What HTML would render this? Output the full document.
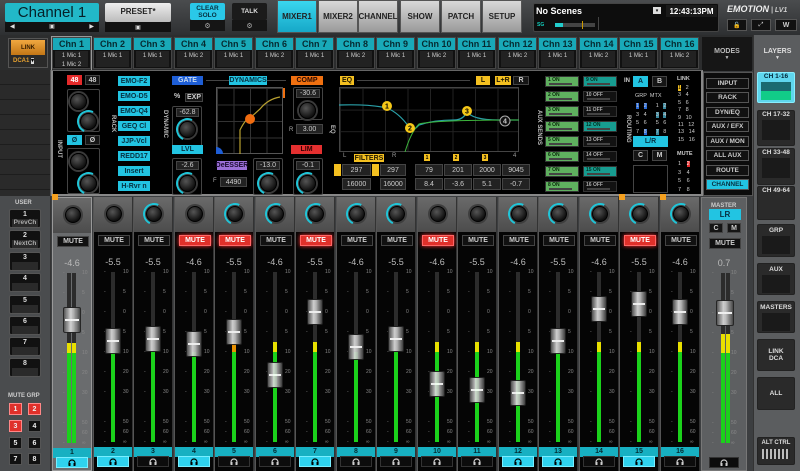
<!DOCTYPE html>
<html><head><meta charset="utf-8"><style>
*{box-sizing:border-box;margin:0;padding:0}
body{width:800px;height:471px;overflow:hidden;background:#3c3e40;font-family:"Liberation Sans",sans-serif;position:relative;color:#ddd}
.a{position:absolute}
.c{display:flex;align-items:center;justify-content:center;text-align:center}
.b{font-weight:bold}
.tab{top:0;height:33px;width:40px;background:linear-gradient(#d8d8d8,#9a9a9a);color:#222;font-size:8px;font-weight:bold;border:1px solid #555}
.ct{top:37px;width:39px;height:32px;background:#111;border:1px solid #444}
.ct .h{position:absolute;left:0;top:0;width:100%;height:12px;background:#19a9b8;color:#062a30;font-size:9px;font-weight:bold;text-align:center;line-height:12px}
.ct .m{position:absolute;left:2px;right:2px;top:13px;bottom:1px;background:#222;font-size:6px;color:#ccc;text-align:center;line-height:9px;padding-top:1px}
.s{top:197px;width:40px;height:274px;background:#050505;border-left:1px solid #555;border-right:1px solid #333}
.s .top{position:absolute;left:0;top:0;width:100%;height:35px;background:linear-gradient(#6a6a6a,#4c4c4c)}
.k{position:absolute;width:20px;height:20px;border-radius:50%;background:radial-gradient(circle at 40% 35%,#555,#111 70%);border:1px solid #000;box-shadow:0 0 0 2px #3a3a3a}
.k.r::before{content:"";position:absolute;left:-4px;top:-4px;right:-4px;bottom:-4px;border-radius:50%;border:2px solid transparent;border-left-color:#20c5d8;border-top-color:#20c5d8;transform:rotate(-20deg)}
.s .k{left:12px;top:9px;width:16px;height:16px;box-shadow:0 0 0 2px #3e3e3e}
.mu{position:absolute;left:4px;width:32px;top:38px;height:11px;background:#111;border:1px solid #444;font-size:7px;font-weight:bold;color:#ccc;text-align:center;line-height:9px}
.mu.on{background:#e0302a;color:#fff;border-color:#f66;box-shadow:0 0 4px #f33}
.v{position:absolute;left:0;width:100%;top:60px;font-size:9px;color:#bbb;text-align:center}
.tr{position:absolute;left:17px;top:75px;width:4px;height:170px;background:#2c2c2c}
.y{position:absolute;left:17px;width:4px;top:145px;height:10px;background:#e8e000}
.g{position:absolute;left:17px;width:4px;top:155px;height:90px;background:#1bd11b}
.cap{position:absolute;left:11px;width:16px;height:26px;border-radius:2px;background:linear-gradient(90deg,#555,#ddd 40%,#bbb 60%,#444);border:1px solid #222;opacity:.92}
.cap::after{content:"";position:absolute;left:1px;right:1px;top:11px;height:2px;background:#fff}
.sc i{position:absolute;left:29px;font-style:normal;font-size:5px;color:#888;line-height:6px}
.sc i::before{content:"-";position:absolute;left:-19px}
.sc i:nth-child(1){top:72px}.sc i:nth-child(2){top:92px}.sc i:nth-child(3){top:112px}.sc i:nth-child(4){top:132px}.sc i:nth-child(5){top:152px}.sc i:nth-child(6){top:172px}.sc i:nth-child(7){top:192px}.sc i:nth-child(8){top:222px}.sc i:nth-child(9){top:232px}.sc i:nth-child(10){top:242px}
.n{position:absolute;left:0;width:100%;top:250px;height:10px;background:#17b0c2;color:#052a30;font-size:7px;font-weight:bold;text-align:center;line-height:10px}
.hp{position:absolute;left:3px;right:3px;top:259px;height:11px;background:#0c0c0c;border:1px solid #333;display:flex;align-items:center;justify-content:center}
.hp.on{background:#2fd2ee;border-color:#7ef}
.hp svg{width:8px;height:7px}
.bt{position:absolute;font-size:7px;font-weight:bold;display:flex;align-items:center;justify-content:center;text-align:center}
.cy{background:#22c4e2;color:#063040}
.dk{background:#151515;color:#ccc;border:1px solid #444}
.rk{left:118px;width:32px;height:10px}
.vb{position:absolute;border:1px solid #444;background:#000;border-radius:2px}
.val{position:absolute;background:#222;border:1px solid #444;color:#ccc;font-size:7px;display:flex;align-items:center;justify-content:center}
.vt{position:absolute;font-size:6px;color:#bbb;font-weight:bold;writing-mode:vertical-rl}
.ax{position:absolute;height:11px;width:34px;font-size:5px;font-weight:bold;padding-left:2px;line-height:6px;border:1px solid #333}
.ax::after{content:"";position:absolute;left:3px;right:6px;bottom:1px;height:2px;background:#444}
.ag{background:#5fb05f;color:#0a2a0a}
.at{background:#179c90;color:#032}
.ao{background:#121212;color:#aaa}
.md{left:706px;width:43px;height:11px;border:1px solid #555;background:#111;color:#ccc;font-size:6.5px}
.ly{left:757px;width:38px;border:1px solid #222;background:#2a2a2a;border-radius:2px;font-size:6.5px;font-weight:bold;color:#ddd;text-align:center}
.ub{left:9px;width:32px;height:19px;background:#111;border:1px solid #555;border-radius:2px;font-size:7px;font-weight:bold;color:#ddd;text-align:center;line-height:9px}
.ub span{display:block;margin:0 2px;background:#2a2a2a;color:#aaa;height:8px;font-size:6.5px;line-height:8px}
.mg{width:13px;height:12px;font-size:7px;font-weight:bold;background:#111;color:#eee;border:1px solid #555;display:flex;align-items:center;justify-content:center}
.mg.r{background:#e0302a;border-color:#f88}
.lk{position:absolute;font-size:5.5px;color:#ccc}
</style></head><body>

<!-- HEADER -->
<div class="a" style="left:0;top:0;width:800px;height:35px;background:linear-gradient(#4a4c4e,#2e3032)"></div>
<div class="a c" style="left:5px;top:3px;width:94px;height:19px;background:#22b8c8;color:#062028;font-size:15px;border-radius:2px">Channel 1</div>
<div class="a" style="left:5px;top:22px;width:94px;height:10px;background:#111;font-size:6px;color:#ddd;display:flex;justify-content:space-between;padding:1px 5px"><span>◀</span><span>▣</span><span>▶</span></div>
<div class="a c b" style="left:105px;top:3px;width:66px;height:19px;background:linear-gradient(#eee,#bbb);color:#222;font-size:8px;align-items:flex-start;padding-top:4px;border-radius:2px">PRESET*</div>
<div class="a c" style="left:105px;top:22px;width:66px;height:10px;background:#111;font-size:6px;color:#ddd">▣</div>
<div class="a c b" style="left:190px;top:3px;width:35px;height:17px;background:#2ac8e8;color:#063040;font-size:6.5px;line-height:7px;border-radius:2px">CLEAR<br>SOLO</div>
<div class="a c" style="left:190px;top:20px;width:35px;height:11px;background:#151515;font-size:7px;color:#aaa">⚙</div>
<div class="a c b" style="left:232px;top:3px;width:35px;height:17px;background:#1b1b1b;color:#ddd;font-size:6.5px;border-radius:2px">TALK</div>
<div class="a c" style="left:232px;top:20px;width:35px;height:11px;background:#151515;font-size:7px;color:#aaa">⚙</div>
<div class="a tab c" style="left:277px;background:linear-gradient(#3ad6ee,#16a8c8)">MIXER1</div>
<div class="a tab c" style="left:318px">MIXER2</div>
<div class="a tab c" style="left:358px">CHANNEL</div>
<div class="a tab c" style="left:400px">SHOW</div>
<div class="a tab c" style="left:441px">PATCH</div>
<div class="a tab c" style="left:482px">SETUP</div>
<div class="a" style="left:533px;top:3px;width:186px;height:29px;background:#0d0d0d;border:1px solid #444;border-radius:2px"></div>
<div class="a b" style="left:536px;top:6px;font-size:9px;color:#fff">No Scenes</div>
<div class="a c" style="left:653px;top:7px;width:8px;height:7px;background:#ddd;color:#000;font-size:5px">▾</div>
<div class="a c b" style="left:666px;top:5px;width:51px;height:12px;background:#1a1a1a;color:#fff;font-size:8px">12:43:13PM</div>
<div class="a b" style="left:537px;top:22px;font-size:5px;color:#1cb">SG</div>
<div class="a" style="left:555px;top:23px;width:40px;height:4px;background:#444"><div style="width:8px;height:4px;background:#2cc"></div></div>
<div class="a" style="left:582px;top:21px;width:1px;height:8px;background:#c90"></div>
<div class="a" style="left:598px;top:17px;width:1px;height:13px;background:#444"></div>
<div class="a b" style="left:727px;top:4px;font-size:9px;font-style:italic;color:#eee">EMOTION<span style="font-size:7px;color:#ccc"> | LV1</span></div>
<div class="a c" style="left:727px;top:19px;width:20px;height:12px;background:#111;border:1px solid #555;font-size:6px">🔓</div>
<div class="a c" style="left:751px;top:19px;width:20px;height:12px;background:#111;border:1px solid #555;font-size:6px">⤢</div>
<div class="a c b" style="left:775px;top:19px;width:22px;height:12px;background:#111;border:1px solid #555;font-size:7px;color:#ccc">W</div>

<!-- CHANNEL TAB ROW -->
<div class="a" style="left:0;top:35px;width:800px;height:35px;background:#2c2d2e"></div>
<div class="a" style="left:8px;top:38px;width:40px;height:30px;background:#2a2a2a;border:1px solid #555"></div>
<div class="a c b" style="left:11px;top:40px;width:34px;height:15px;background:linear-gradient(#f0a840,#c27616);color:#3a2000;font-size:6px">LINK</div>
<div class="a b" style="left:13px;top:57px;font-size:6px;color:#e5a030">DCA1 <span style="background:#ddd;color:#000">▾</span></div>
<div class="a" style="left:51px;top:36px;width:41px;height:36px;border:1px solid #999"></div>
<div class="a ct" style="left:52px"><div class="h">Chn 1</div><div class="m">1 Mic 1<br>1 Mic 2</div></div>
<div class="a ct" style="left:93px"><div class="h">Chn 2</div><div class="m">1 Mic 1</div></div>
<div class="a ct" style="left:133px"><div class="h">Chn 3</div><div class="m">1 Mic 1</div></div>
<div class="a ct" style="left:174px"><div class="h">Chn 4</div><div class="m">1 Mic 2</div></div>
<div class="a ct" style="left:214px"><div class="h">Chn 5</div><div class="m">1 Mic 1</div></div>
<div class="a ct" style="left:255px"><div class="h">Chn 6</div><div class="m">1 Mic 2</div></div>
<div class="a ct" style="left:295px"><div class="h">Chn 7</div><div class="m">1 Mic 1</div></div>
<div class="a ct" style="left:336px"><div class="h">Chn 8</div><div class="m">1 Mic 2</div></div>
<div class="a ct" style="left:376px"><div class="h">Chn 9</div><div class="m">1 Mic 1</div></div>
<div class="a ct" style="left:417px"><div class="h">Chn 10</div><div class="m">1 Mic 2</div></div>
<div class="a ct" style="left:457px"><div class="h">Chn 11</div><div class="m">1 Mic 1</div></div>
<div class="a ct" style="left:498px"><div class="h">Chn 12</div><div class="m">1 Mic 2</div></div>
<div class="a ct" style="left:538px"><div class="h">Chn 13</div><div class="m">1 Mic 1</div></div>
<div class="a ct" style="left:579px"><div class="h">Chn 14</div><div class="m">1 Mic 2</div></div>
<div class="a ct" style="left:619px"><div class="h">Chn 15</div><div class="m">1 Mic 1</div></div>
<div class="a ct" style="left:660px"><div class="h">Chn 16</div><div class="m">1 Mic 2</div></div>
<div class="a c b" style="left:702px;top:37px;width:50px;height:34px;background:#161616;color:#bbb;font-size:7px;flex-direction:column">MODES<span style="font-size:5px">▼</span></div>
<div class="a" style="left:753px;top:35px;width:47px;height:436px;background:#5b5d5f;border-left:1px solid #333"></div>
<div class="a c b" style="left:755px;top:37px;width:45px;height:34px;color:#ddd;font-size:7px;flex-direction:column">LAYERS<span style="font-size:5px">▼</span></div>

<!-- LEFT SIDE MID -->
<div class="a" style="left:0;top:70px;width:51px;height:126px;background:repeating-linear-gradient(#2a2a2a 0 14px,#1d1d1d 14px 15px);border-right:1px solid #555"></div>
<!-- CHANNEL PANEL -->
<div class="a" style="left:51px;top:70px;width:652px;height:126px;background:#000;border:2px solid #888;border-top:1px solid #666"></div>
<div class="bt" style="left:67px;top:75px;width:15px;height:10px;background:#e52a2a;color:#fff">48</div>
<div class="bt dk" style="left:85px;top:75px;width:15px;height:10px">48</div>
<div class="vb" style="left:67px;top:89px;width:33px;height:43px"></div>
<div class="k" style="left:70px;top:93px;width:17px;height:17px"></div>
<div class="k r" style="left:80px;top:113px;width:17px;height:17px"></div>
<div class="bt cy" style="left:67px;top:135px;width:15px;height:10px">Ø</div>
<div class="bt dk" style="left:85px;top:135px;width:15px;height:10px">Ø</div>
<div class="vb" style="left:67px;top:148px;width:33px;height:46px"></div>
<div class="k" style="left:70px;top:153px;width:17px;height:17px"></div>
<div class="k r" style="left:80px;top:175px;width:17px;height:17px"></div>
<div class="vt" style="left:56px;top:140px">INPUT</div>
<div class="vt" style="left:110px;top:115px">RACK</div>
<div class="bt cy rk" style="top:76px">EMO-F2</div>
<div class="bt cy rk" style="top:91px">EMO-D5</div>
<div class="bt cy rk" style="top:106px">EMO-Q4</div>
<div class="bt cy rk" style="top:121px">GEQ Cl</div>
<div class="bt cy rk" style="top:136px">JJP-Vcl</div>
<div class="bt cy rk" style="top:151px">REDD17</div>
<div class="bt cy rk" style="top:166px">Insert</div>
<div class="bt cy rk" style="top:181px">H-Rvr n</div>
<div class="vt" style="left:162px;top:110px">DYNAMIC</div>
<div class="bt" style="left:172px;top:76px;width:31px;height:9px;background:#1e5ed6;color:#cde">GATE</div>
<div class="a" style="left:206px;top:80px;width:80px;height:1px;background:#444"></div>
<div class="bt cy" style="left:229px;top:76px;width:38px;height:9px">DYNAMICS</div>
<div class="bt" style="left:291px;top:76px;width:32px;height:9px;background:#f07010;color:#2a0a00">COMP</div>
<div class="a b" style="left:174px;top:93px;font-size:7px;color:#ccc">%</div>
<div class="bt dk" style="left:185px;top:93px;width:18px;height:9px">EXP</div>
<div class="vb" style="left:172px;top:106px;width:30px;height:44px"></div>
<div class="val" style="left:176px;top:108px;width:23px;height:9px">-62.8</div>
<div class="k r" style="left:179px;top:121px;width:17px;height:17px"></div>
<div class="bt cy" style="left:172px;top:145px;width:31px;height:9px">LVL</div>
<div class="vb" style="left:172px;top:158px;width:30px;height:37px"></div>
<div class="val" style="left:176px;top:161px;width:23px;height:9px">-2.6</div>
<div class="k r" style="left:179px;top:175px;width:17px;height:17px"></div>
<div class="a" style="left:216px;top:87px;width:67px;height:67px;border:1px solid #555;background-color:#000;background-image:linear-gradient(#333 1px,transparent 1px),linear-gradient(90deg,#333 1px,transparent 1px);background-size:16.5px 16.5px"></div>
<svg class="a" style="left:216px;top:87px" width="67" height="67"><path d="M24 67 V43 Q30 31 34 31 L44 22 Q52 12 64 10" fill="none" stroke="#b8a030" stroke-width="1.2"/><circle cx="34" cy="32" r="5" fill="#f06c10"/><path d="M0 67 V60 A7 7 0 0 1 7 67Z" fill="#1e5ed6"/></svg>
<div class="a" style="left:283px;top:88px;width:2px;height:10px;background:#f07010"></div>
<div class="bt" style="left:217px;top:161px;width:30px;height:9px;background:#9b70d8;color:#1a0a30">DeESSER</div>
<div class="a" style="left:213px;top:178px;font-size:6px;color:#aaa">F</div>
<div class="val" style="left:220px;top:177px;width:27px;height:10px">4490</div>
<div class="vb" style="left:253px;top:158px;width:30px;height:37px"></div>
<div class="val" style="left:256px;top:161px;width:24px;height:9px">-13.0</div>
<div class="k r" style="left:260px;top:175px;width:17px;height:17px"></div>
<div class="vb" style="left:293px;top:87px;width:30px;height:33px"></div>
<div class="val" style="left:296px;top:89px;width:24px;height:9px">-30.6</div>
<div class="k" style="left:299px;top:102px;width:17px;height:17px"></div>
<div class="a" style="left:289px;top:127px;font-size:6px;color:#aaa">R</div>
<div class="val" style="left:296px;top:124px;width:27px;height:10px">3.00</div>
<div class="bt" style="left:291px;top:145px;width:31px;height:9px;background:#e53030;color:#300">LIM</div>
<div class="vb" style="left:293px;top:158px;width:30px;height:37px"></div>
<div class="val" style="left:296px;top:161px;width:24px;height:9px">-0.1</div>
<div class="k r" style="left:299px;top:175px;width:17px;height:17px"></div>
<div class="vt" style="left:329px;top:125px">EQ</div>
<div class="bt" style="left:340px;top:76px;width:14px;height:9px;background:#f4c020;color:#201800">EQ</div>
<div class="a" style="left:357px;top:80px;width:113px;height:1px;background:#444"></div>
<div class="bt" style="left:476px;top:76px;width:14px;height:9px;background:#f4c020;color:#201800">L</div>
<div class="bt" style="left:495px;top:76px;width:16px;height:9px;background:#f4c020;color:#201800">L+R</div>
<div class="bt dk" style="left:513px;top:76px;width:16px;height:9px">R</div>
<div class="a" style="left:339px;top:87px;width:180px;height:65px;border:1px solid #444;background-color:#000;background-image:linear-gradient(90deg,#222 1px,transparent 1px),linear-gradient(#222 1px,transparent 1px);background-size:22.5px 100%,100% 21.6px"></div>
<svg class="a" style="left:339px;top:87px" width="180" height="65"><path d="M0 18 Q30 17 48 21 Q60 26 70 40 Q73 46 80 38 Q95 33 115 33 Q125 33 128 24 Q132 33 160 33 L180 33" fill="none" stroke="#2aa0a8" stroke-width="1.2"/><path d="M66 65 Q72 45 80 37 Q95 33 180 33" fill="none" stroke="#3cb43c" stroke-width="1"/><circle cx="48" cy="19" r="5" fill="#f6c818"/><text x="48" y="21.5" font-size="7" text-anchor="middle" font-weight="bold" fill="#000">1</text><circle cx="71" cy="41" r="5" fill="#f6c818"/><text x="71" y="43.5" font-size="7" text-anchor="middle" font-weight="bold" fill="#000">2</text><circle cx="128" cy="24" r="5" fill="#f6c818"/><text x="128" y="26.5" font-size="7" text-anchor="middle" font-weight="bold" fill="#000">3</text><circle cx="166" cy="34" r="5" fill="#111" stroke="#aaa"/><text x="166" y="36.5" font-size="7" text-anchor="middle" font-weight="bold" fill="#ccc">4</text></svg>
<div class="a" style="left:343px;top:153px;font-size:6px;color:#999">L</div>
<div class="bt" style="left:354px;top:154px;width:30px;height:8px;background:#f4c020;color:#201800">FILTERS</div>
<div class="a" style="left:392px;top:153px;font-size:6px;color:#999">R</div>
<div class="bt" style="left:424px;top:154px;width:6px;height:7px;background:#f4c020;color:#000;font-size:5px">1</div>
<div class="bt" style="left:453px;top:154px;width:6px;height:7px;background:#f4c020;color:#000;font-size:5px">2</div>
<div class="bt" style="left:482px;top:154px;width:6px;height:7px;background:#f4c020;color:#000;font-size:5px">3</div>
<div class="a" style="left:513px;top:153px;font-size:6px;color:#999">4</div>
<div class="a" style="left:334px;top:164px;width:7px;height:12px;background:#f4c020"></div>
<div class="val" style="left:342px;top:164px;width:29px;height:12px">297</div>
<div class="a" style="left:372px;top:164px;width:7px;height:12px;background:#f4c020"></div>
<div class="val" style="left:380px;top:164px;width:26px;height:12px">297</div>
<div class="val" style="left:415px;top:164px;width:28px;height:12px">79</div>
<div class="val" style="left:444px;top:164px;width:28px;height:12px">201</div>
<div class="val" style="left:473px;top:164px;width:28px;height:12px">2000</div>
<div class="val" style="left:502px;top:164px;width:28px;height:12px">9045</div>
<div class="val" style="left:342px;top:178px;width:29px;height:12px">16000</div>
<div class="val" style="left:380px;top:178px;width:26px;height:12px">16000</div>
<div class="val" style="left:415px;top:178px;width:28px;height:12px">8.4</div>
<div class="val" style="left:444px;top:178px;width:28px;height:12px">-3.6</div>
<div class="val" style="left:473px;top:178px;width:28px;height:12px">5.1</div>
<div class="val" style="left:502px;top:178px;width:28px;height:12px">-0.7</div>
<div class="vt" style="left:536px;top:110px">AUX SENDS</div>
<div class="ax ag" style="left:545px;top:76px">1 ON</div><div class="ax at" style="left:583px;top:76px">9 ON</div>
<div class="ax ag" style="left:545px;top:91px">2 ON</div><div class="ax ao" style="left:583px;top:91px">10 OFF</div>
<div class="ax ag" style="left:545px;top:106px">3 ON</div><div class="ax ao" style="left:583px;top:106px">11 OFF</div>
<div class="ax ag" style="left:545px;top:121px">4 ON</div><div class="ax at" style="left:583px;top:121px">12 ON</div>
<div class="ax ag" style="left:545px;top:136px">5 ON</div><div class="ax ao" style="left:583px;top:136px">13 OFF</div>
<div class="ax ag" style="left:545px;top:151px">6 ON</div><div class="ax ao" style="left:583px;top:151px">14 OFF</div>
<div class="ax ag" style="left:545px;top:166px">7 ON</div><div class="ax at" style="left:583px;top:166px">15 ON</div>
<div class="ax ag" style="left:545px;top:181px">8 ON</div><div class="ax ao" style="left:583px;top:181px">16 OFF</div>
<div class="a b" style="left:624px;top:78px;font-size:6px;color:#ccc">IN</div>
<div class="bt cy" style="left:633px;top:76px;width:15px;height:11px">A</div>
<div class="bt dk" style="left:652px;top:76px;width:15px;height:11px">B</div>
<div class="vt" style="left:625px;top:115px">ROUTING</div>
<div class="lk" style="left:635px;top:93px">GRP &nbsp;MTX</div>
<div class="lk" style="left:636px;top:102px;line-height:8.5px;word-spacing:3px"><span style="background:#2a6ad6">1</span> <span style="background:#2a6ad6">2</span> &nbsp;1 <span style="background:#3a8aa0">2</span><br>3 4 &nbsp;<span style="background:#3a8aa0">3</span> <span style="background:#3a8aa0">4</span><br>5 6 &nbsp;5 6<br>7 <span style="background:#2a6ad6">8</span> &nbsp;<span style="background:#3a8aa0">7</span> 8</div>
<div class="bt cy" style="left:633px;top:136px;width:35px;height:11px">L/R</div>
<div class="bt dk" style="left:633px;top:150px;width:15px;height:11px">C</div>
<div class="bt dk" style="left:652px;top:150px;width:15px;height:11px">M</div>
<div class="a" style="left:633px;top:165px;width:35px;height:28px;border:1px solid #444"></div>
<div class="lk b" style="left:677px;top:76px">LINK</div>
<div class="lk" style="left:678px;top:85px;line-height:7.4px;word-spacing:3px"><span style="background:#f4c020;color:#000">1</span> 2<br>3 4<br>5 6<br>7 8<br>9 10<br>11 12<br>13 14<br>15 16</div>
<div class="lk b" style="left:677px;top:151px;color:#ccc">MUTE</div>
<div class="lk" style="left:678px;top:160px;line-height:8.5px;word-spacing:4px">1 <span style="background:#e52a2a;color:#fff">2</span><br>3 4<br>5 6<br>7 8</div>
<!-- MODES -->
<div class="a" style="left:703px;top:72px;width:50px;height:124px;background:#0c0c0c;border:1px solid #555"></div>
<div class="bt md" style="top:78px">INPUT</div>
<div class="bt md" style="top:92px">RACK</div>
<div class="bt md" style="top:107px">DYN/EQ</div>
<div class="bt md" style="top:121px">AUX / EFX</div>
<div class="bt md" style="top:136px">AUX / MON</div>
<div class="bt md" style="top:150px">ALL AUX</div>
<div class="bt md" style="top:165px">ROUTE</div>
<div class="bt md cy" style="top:179px;background:#22c4e2;color:#063040">CHANNEL</div>
<!-- LAYERS -->
<div class="a ly" style="top:72px;height:31px;background:#5fd6ee;border:1px solid #8ef;color:#023">CH 1-16<div style="margin:2px 3px;height:18px;background:linear-gradient(#1a6a70 50%,#1c8 50%)"></div></div>
<div class="a ly" style="top:110px;height:36px">CH 17-32<div style="margin:2px 4px;height:20px;background:#1a1a1a"></div></div>
<div class="a ly" style="top:148px;height:37px">CH 33-48<div style="margin:2px 4px;height:20px;background:#1a1a1a"></div></div>
<div class="a ly" style="top:186px;height:34px">CH 49-64</div>
<div class="a ly" style="top:224px;height:33px;padding-top:2px">GRP<div style="margin:2px 4px;height:18px;background:#1a1a1a"></div></div>
<div class="a ly" style="top:263px;height:32px;padding-top:2px">AUX<div style="margin:2px 4px;height:18px;background:#1a1a1a"></div></div>
<div class="a ly" style="top:301px;height:32px;padding-top:2px">MASTERS<div style="margin:2px 4px;height:18px;background:#1a1a1a"></div></div>
<div class="a ly c" style="top:339px;height:32px">LINK<br>DCA</div>
<div class="a ly c" style="top:377px;height:33px">ALL</div>
<div class="a ly" style="top:437px;height:28px;font-size:6px;padding-top:2px">ALT CTRL<div style="margin:3px 4px;height:10px;background:repeating-linear-gradient(90deg,#bbb 0 2px,#222 2px 4px)"></div></div>

<!-- LEFT USER PANEL -->
<div class="a" style="left:0;top:196px;width:51px;height:275px;background:#4a4c4e;border-right:1px solid #333"></div>
<div class="a b" style="left:15px;top:200px;font-size:6px;color:#ccc">USER</div>
<div class="a ub" style="top:209px">1<span>PrevCh</span></div>
<div class="a ub" style="top:230px">2<span>NextCh</span></div>
<div class="a ub" style="top:252px">3<span></span></div>
<div class="a ub" style="top:273px">4<span></span></div>
<div class="a ub" style="top:295px">5<span></span></div>
<div class="a ub" style="top:316px">6<span></span></div>
<div class="a ub" style="top:337px">7<span></span></div>
<div class="a ub" style="top:358px">8<span></span></div>
<div class="a b" style="left:8px;top:393px;font-size:6px;color:#ccc">MUTE GRP</div>
<div class="a mg r" style="left:9px;top:403px">1</div><div class="a mg r" style="left:28px;top:403px">2</div>
<div class="a mg r" style="left:9px;top:420px">3</div><div class="a mg" style="left:28px;top:420px">4</div>
<div class="a mg" style="left:9px;top:437px">5</div><div class="a mg" style="left:28px;top:437px">6</div>
<div class="a mg" style="left:9px;top:453px">7</div><div class="a mg" style="left:28px;top:453px">8</div>

<!-- STRIPS -->
<div class="a s" style="left:52px;background:#6a6c6e;border:1px solid #999"><div class="top"></div><div class="k"></div><div class="mu">MUTE</div><div class="v">-4.6</div><div class="sc"><i>10</i><i>5</i><i>0</i><i>5</i><i>10</i><i>20</i><i>30</i><i>50</i><i>60</i><i>∞</i></div><div class="tr" style="left:14px;width:9px;background:linear-gradient(90deg,#2c2c2c 4px,transparent 4px 5px,#2c2c2c 5px)"></div><div class="y" style="left:14px;width:9px;background:linear-gradient(90deg,#e8e000 4px,transparent 4px 5px,#e8e000 5px)"></div><div class="g" style="left:14px;width:9px;background:linear-gradient(90deg,#1bd11b 4px,transparent 4px 5px,#1bd11b 5px)"></div><div class="cap" style="top:109px;left:10px;width:18px"></div><div class="n">1</div><div class="hp on"><svg viewBox="0 0 8 7"><path d="M1 6V4a3 3 0 0 1 6 0v2" fill="none" stroke="#000" stroke-width="1.2"/><rect x="0.5" y="4" width="2" height="3" fill="#000"/><rect x="5.5" y="4" width="2" height="3" fill="#000"/></svg></div></div>
<div class="a s" style="left:93px"><div class="top"></div><div class="k"></div><div class="mu">MUTE</div><div class="v">-5.5</div><div class="sc"><i>10</i><i>5</i><i>0</i><i>5</i><i>10</i><i>20</i><i>30</i><i>50</i><i>60</i><i>∞</i></div><div class="tr"></div><div class="g"></div><div class="cap" style="top:131px"></div><div class="n">2</div><div class="hp on"><svg viewBox="0 0 8 7"><path d="M1 6V4a3 3 0 0 1 6 0v2" fill="none" stroke="#000" stroke-width="1.2"/><rect x="0.5" y="4" width="2" height="3" fill="#000"/><rect x="5.5" y="4" width="2" height="3" fill="#000"/></svg></div></div>
<div class="a s" style="left:133px"><div class="top"></div><div class="k r"></div><div class="mu">MUTE</div><div class="v">-5.5</div><div class="sc"><i>10</i><i>5</i><i>0</i><i>5</i><i>10</i><i>20</i><i>30</i><i>50</i><i>60</i><i>∞</i></div><div class="tr"></div><div class="g"></div><div class="cap" style="top:129px"></div><div class="n">3</div><div class="hp"><svg viewBox="0 0 8 7"><path d="M1 6V4a3 3 0 0 1 6 0v2" fill="none" stroke="#ccc" stroke-width="1.2"/><rect x="0.5" y="4" width="2" height="3" fill="#ccc"/><rect x="5.5" y="4" width="2" height="3" fill="#ccc"/></svg></div></div>
<div class="a s" style="left:174px"><div class="top"></div><div class="k"></div><div class="mu on">MUTE</div><div class="v">-4.6</div><div class="sc"><i>10</i><i>5</i><i>0</i><i>5</i><i>10</i><i>20</i><i>30</i><i>50</i><i>60</i><i>∞</i></div><div class="tr"></div><div class="g"></div><div class="cap" style="top:134px"></div><div class="n">4</div><div class="hp on"><svg viewBox="0 0 8 7"><path d="M1 6V4a3 3 0 0 1 6 0v2" fill="none" stroke="#000" stroke-width="1.2"/><rect x="0.5" y="4" width="2" height="3" fill="#000"/><rect x="5.5" y="4" width="2" height="3" fill="#000"/></svg></div></div>
<div class="a s" style="left:214px"><div class="top"></div><div class="k r"></div><div class="mu on">MUTE</div><div class="v">-5.5</div><div class="sc"><i>10</i><i>5</i><i>0</i><i>5</i><i>10</i><i>20</i><i>30</i><i>50</i><i>60</i><i>∞</i></div><div class="tr"></div><div class="y" style="background:#e89000"></div><div class="g"></div><div class="cap" style="top:122px"></div><div class="n">5</div><div class="hp"><svg viewBox="0 0 8 7"><path d="M1 6V4a3 3 0 0 1 6 0v2" fill="none" stroke="#ccc" stroke-width="1.2"/><rect x="0.5" y="4" width="2" height="3" fill="#ccc"/><rect x="5.5" y="4" width="2" height="3" fill="#ccc"/></svg></div></div>
<div class="a s" style="left:255px"><div class="top"></div><div class="k r"></div><div class="mu">MUTE</div><div class="v">-4.6</div><div class="sc"><i>10</i><i>5</i><i>0</i><i>5</i><i>10</i><i>20</i><i>30</i><i>50</i><i>60</i><i>∞</i></div><div class="tr"></div><div class="y"></div><div class="g"></div><div class="cap" style="top:165px"></div><div class="n">6</div><div class="hp"><svg viewBox="0 0 8 7"><path d="M1 6V4a3 3 0 0 1 6 0v2" fill="none" stroke="#ccc" stroke-width="1.2"/><rect x="0.5" y="4" width="2" height="3" fill="#ccc"/><rect x="5.5" y="4" width="2" height="3" fill="#ccc"/></svg></div></div>
<div class="a s" style="left:295px"><div class="top"></div><div class="k r"></div><div class="mu on">MUTE</div><div class="v">-5.5</div><div class="sc"><i>10</i><i>5</i><i>0</i><i>5</i><i>10</i><i>20</i><i>30</i><i>50</i><i>60</i><i>∞</i></div><div class="tr"></div><div class="y"></div><div class="g"></div><div class="cap" style="top:102px"></div><div class="n">7</div><div class="hp on"><svg viewBox="0 0 8 7"><path d="M1 6V4a3 3 0 0 1 6 0v2" fill="none" stroke="#000" stroke-width="1.2"/><rect x="0.5" y="4" width="2" height="3" fill="#000"/><rect x="5.5" y="4" width="2" height="3" fill="#000"/></svg></div></div>
<div class="a s" style="left:336px"><div class="top"></div><div class="k r"></div><div class="mu">MUTE</div><div class="v">-4.6</div><div class="sc"><i>10</i><i>5</i><i>0</i><i>5</i><i>10</i><i>20</i><i>30</i><i>50</i><i>60</i><i>∞</i></div><div class="tr"></div><div class="g"></div><div class="cap" style="top:137px"></div><div class="n">8</div><div class="hp"><svg viewBox="0 0 8 7"><path d="M1 6V4a3 3 0 0 1 6 0v2" fill="none" stroke="#ccc" stroke-width="1.2"/><rect x="0.5" y="4" width="2" height="3" fill="#ccc"/><rect x="5.5" y="4" width="2" height="3" fill="#ccc"/></svg></div></div>
<div class="a s" style="left:376px"><div class="top"></div><div class="k r"></div><div class="mu">MUTE</div><div class="v">-5.5</div><div class="sc"><i>10</i><i>5</i><i>0</i><i>5</i><i>10</i><i>20</i><i>30</i><i>50</i><i>60</i><i>∞</i></div><div class="tr"></div><div class="g"></div><div class="cap" style="top:129px"></div><div class="n">9</div><div class="hp"><svg viewBox="0 0 8 7"><path d="M1 6V4a3 3 0 0 1 6 0v2" fill="none" stroke="#ccc" stroke-width="1.2"/><rect x="0.5" y="4" width="2" height="3" fill="#ccc"/><rect x="5.5" y="4" width="2" height="3" fill="#ccc"/></svg></div></div>
<div class="a s" style="left:417px"><div class="top"></div><div class="k"></div><div class="mu on">MUTE</div><div class="v">-4.6</div><div class="sc"><i>10</i><i>5</i><i>0</i><i>5</i><i>10</i><i>20</i><i>30</i><i>50</i><i>60</i><i>∞</i></div><div class="tr"></div><div class="y"></div><div class="g"></div><div class="cap" style="top:174px"></div><div class="n">10</div><div class="hp"><svg viewBox="0 0 8 7"><path d="M1 6V4a3 3 0 0 1 6 0v2" fill="none" stroke="#ccc" stroke-width="1.2"/><rect x="0.5" y="4" width="2" height="3" fill="#ccc"/><rect x="5.5" y="4" width="2" height="3" fill="#ccc"/></svg></div></div>
<div class="a s" style="left:457px"><div class="top"></div><div class="k"></div><div class="mu">MUTE</div><div class="v">-5.5</div><div class="sc"><i>10</i><i>5</i><i>0</i><i>5</i><i>10</i><i>20</i><i>30</i><i>50</i><i>60</i><i>∞</i></div><div class="tr"></div><div class="y"></div><div class="g"></div><div class="cap" style="top:180px"></div><div class="n">11</div><div class="hp"><svg viewBox="0 0 8 7"><path d="M1 6V4a3 3 0 0 1 6 0v2" fill="none" stroke="#ccc" stroke-width="1.2"/><rect x="0.5" y="4" width="2" height="3" fill="#ccc"/><rect x="5.5" y="4" width="2" height="3" fill="#ccc"/></svg></div></div>
<div class="a s" style="left:498px"><div class="top"></div><div class="k r"></div><div class="mu">MUTE</div><div class="v">-4.6</div><div class="sc"><i>10</i><i>5</i><i>0</i><i>5</i><i>10</i><i>20</i><i>30</i><i>50</i><i>60</i><i>∞</i></div><div class="tr"></div><div class="y"></div><div class="g"></div><div class="cap" style="top:183px"></div><div class="n">12</div><div class="hp on"><svg viewBox="0 0 8 7"><path d="M1 6V4a3 3 0 0 1 6 0v2" fill="none" stroke="#000" stroke-width="1.2"/><rect x="0.5" y="4" width="2" height="3" fill="#000"/><rect x="5.5" y="4" width="2" height="3" fill="#000"/></svg></div></div>
<div class="a s" style="left:538px"><div class="top"></div><div class="k r"></div><div class="mu">MUTE</div><div class="v">-5.5</div><div class="sc"><i>10</i><i>5</i><i>0</i><i>5</i><i>10</i><i>20</i><i>30</i><i>50</i><i>60</i><i>∞</i></div><div class="tr"></div><div class="g"></div><div class="cap" style="top:131px"></div><div class="n">13</div><div class="hp on"><svg viewBox="0 0 8 7"><path d="M1 6V4a3 3 0 0 1 6 0v2" fill="none" stroke="#000" stroke-width="1.2"/><rect x="0.5" y="4" width="2" height="3" fill="#000"/><rect x="5.5" y="4" width="2" height="3" fill="#000"/></svg></div></div>
<div class="a s" style="left:579px"><div class="top"></div><div class="k r"></div><div class="mu">MUTE</div><div class="v">-4.6</div><div class="sc"><i>10</i><i>5</i><i>0</i><i>5</i><i>10</i><i>20</i><i>30</i><i>50</i><i>60</i><i>∞</i></div><div class="tr"></div><div class="y"></div><div class="g"></div><div class="cap" style="top:99px"></div><div class="n">14</div><div class="hp"><svg viewBox="0 0 8 7"><path d="M1 6V4a3 3 0 0 1 6 0v2" fill="none" stroke="#ccc" stroke-width="1.2"/><rect x="0.5" y="4" width="2" height="3" fill="#ccc"/><rect x="5.5" y="4" width="2" height="3" fill="#ccc"/></svg></div></div>
<div class="a s" style="left:619px"><div class="top"></div><div class="k r"></div><div class="mu on">MUTE</div><div class="v">-5.5</div><div class="sc"><i>10</i><i>5</i><i>0</i><i>5</i><i>10</i><i>20</i><i>30</i><i>50</i><i>60</i><i>∞</i></div><div class="tr"></div><div class="y"></div><div class="g"></div><div class="cap" style="top:94px"></div><div class="n">15</div><div class="hp on"><svg viewBox="0 0 8 7"><path d="M1 6V4a3 3 0 0 1 6 0v2" fill="none" stroke="#000" stroke-width="1.2"/><rect x="0.5" y="4" width="2" height="3" fill="#000"/><rect x="5.5" y="4" width="2" height="3" fill="#000"/></svg></div></div>
<div class="a s" style="left:660px"><div class="top"></div><div class="k r"></div><div class="mu">MUTE</div><div class="v">-4.6</div><div class="sc"><i>10</i><i>5</i><i>0</i><i>5</i><i>10</i><i>20</i><i>30</i><i>50</i><i>60</i><i>∞</i></div><div class="tr"></div><div class="y"></div><div class="g"></div><div class="cap" style="top:102px"></div><div class="n">16</div><div class="hp"><svg viewBox="0 0 8 7"><path d="M1 6V4a3 3 0 0 1 6 0v2" fill="none" stroke="#ccc" stroke-width="1.2"/><rect x="0.5" y="4" width="2" height="3" fill="#ccc"/><rect x="5.5" y="4" width="2" height="3" fill="#ccc"/></svg></div></div>
<!-- link markers -->
<div class="a" style="left:52px;top:194px;width:6px;height:6px;background:#f4a020"></div>
<div class="a" style="left:619px;top:194px;width:6px;height:6px;background:#f4a020"></div>
<div class="a" style="left:660px;top:194px;width:6px;height:6px;background:#f4a020"></div>

<!-- MASTER -->
<div class="a s" style="left:701px;width:46px;background:#5d5f61;border:1px solid #777"><div class="a b" style="left:9px;top:5px;font-size:6px;color:#ccc">MASTER</div>
<div class="bt cy" style="left:7px;top:11px;width:32px;height:11px;font-size:8px">LR</div>
<div class="bt dk" style="left:7px;top:25px;width:14px;height:10px">C</div>
<div class="bt dk" style="left:25px;top:25px;width:14px;height:10px">M</div>
<div class="mu" style="left:7px;top:40px">MUTE</div><div class="v">0.7</div><div class="sc"><i>10</i><i>5</i><i>0</i><i>5</i><i>10</i><i>20</i><i>30</i><i>50</i><i>60</i><i>∞</i></div><div class="tr" style="left:19px;width:9px;background:linear-gradient(90deg,#2c2c2c 4px,transparent 4px 5px,#2c2c2c 5px)"></div><div class="y" style="left:19px;width:9px;top:136px;height:19px;background:linear-gradient(90deg,#e8e000 4px,transparent 4px 5px,#e8e000 5px)"></div><div class="g" style="left:19px;width:9px;background:linear-gradient(90deg,#1bd11b 4px,transparent 4px 5px,#1bd11b 5px)"></div><div class="cap" style="top:102px;left:14px;width:18px"></div><div class="hp" style="left:7px;right:7px"><svg viewBox="0 0 8 7"><path d="M1 6V4a3 3 0 0 1 6 0v2" fill="none" stroke="#ccc" stroke-width="1.2"/><rect x="0.5" y="4" width="2" height="3" fill="#ccc"/><rect x="5.5" y="4" width="2" height="3" fill="#ccc"/></svg></div></div>
</body></html>
